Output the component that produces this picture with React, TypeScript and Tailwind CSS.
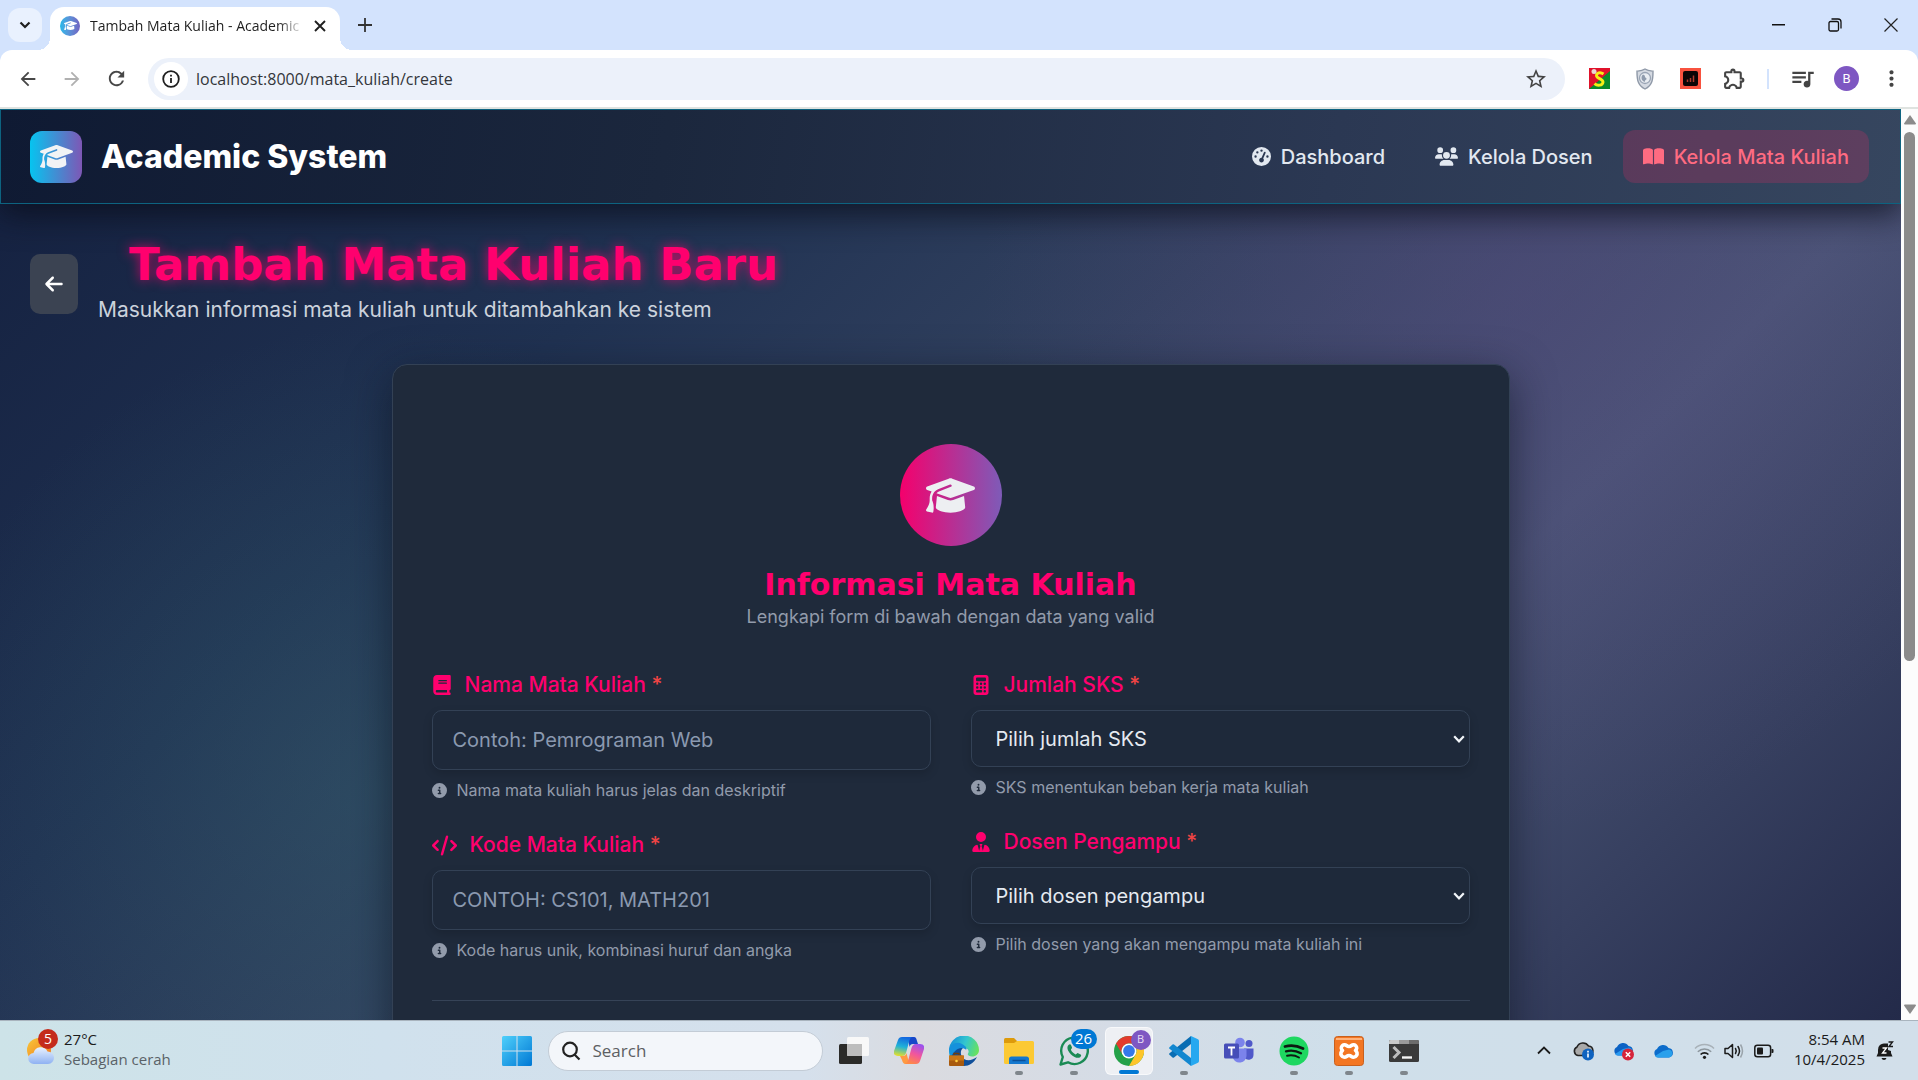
import type { ReactNode } from "react";
import {
  FaArrowLeft,
  FaBook,
  FaBookOpen,
  FaCalculator,
  FaCircleInfo,
  FaCode,
  FaGaugeHigh,
  FaGraduationCap,
  FaUserTie,
  FaUsers,
} from "react-icons/fa6";
import {
  MdArrowBack,
  MdArrowForward,
  MdMoreVert,
  MdOutlineExtension,
  MdQueueMusic,
  MdRefresh,
  MdStarBorder,
} from "react-icons/md";

function TabStrip() {
  return (
    <div className="flex h-[50px] shrink-0 items-end bg-[#d3e3fd] pl-2">
      <button
        aria-label="Search tabs"
        className="mb-2 flex h-[34px] w-[34px] items-center justify-center rounded-xl bg-[#e9f1fe]"
      >
        <svg width="12" height="8" viewBox="0 0 12 8" fill="none" stroke="#1f1f1f" strokeWidth="2.2">
          <path d="M1.5 1.5 6 6l4.5-4.5" />
        </svg>
      </button>
      <div className="-ml-1 flex h-[43px] items-end">
        <span className="h-3 w-3 bg-[radial-gradient(circle_at_0_0,transparent_12px,white_12px)]" />
        <div className="flex h-[43px] w-[290px] items-center rounded-t-[14px] bg-white pr-1 pb-1.5 pl-1.5">
          <span className="ml-1 flex h-5 w-5 shrink-0 items-center justify-center rounded-full bg-gradient-to-r from-[#1bb9ea] to-[#6f63c2] text-white">
            <FaGraduationCap size={13} />
          </span>
          <span className="ml-2.5 flex-1 overflow-hidden font-['Open_Sans','Noto_Sans',sans-serif] text-[14px] whitespace-nowrap text-[#1f1f1f] [mask-image:linear-gradient(to_right,black_88%,transparent)]">
            Tambah Mata Kuliah - Academic
          </span>
          <button aria-label="Close tab" className="flex h-5 w-8 items-center justify-center">
            <svg width="12" height="12" viewBox="0 0 12 12" stroke="#1f1f1f" strokeWidth="1.9">
              <path d="m1 1 10 10M11 1 1 11" />
            </svg>
          </button>
        </div>
        <span className="h-3 w-3 bg-[radial-gradient(circle_at_100%_0,transparent_12px,white_12px)]" />
      </div>
      <button aria-label="New tab" className="mb-4 ml-1 flex h-[18px] w-[18px] items-center justify-center">
        <svg width="14" height="14" viewBox="0 0 14 14" stroke="#333" strokeWidth="1.8">
          <path d="M7 0v14M0 7h14" />
        </svg>
      </button>
      <div className="ml-auto flex h-full items-center gap-10 pr-[18px] text-black">
        <button aria-label="Minimize" className="flex h-4 w-4 items-center">
          <svg width="14" height="2" viewBox="0 0 14 2" fill="#111"><path d="M0 0h13v1.5H0z" /></svg>
        </button>
        <button aria-label="Restore" className="flex h-4 w-4 items-center">
          <svg width="14" height="14" viewBox="0 0 14 14" fill="none" stroke="#111" strokeWidth="1.3">
            <rect x="1" y="3.5" width="9.5" height="9.5" rx="1.5" />
            <path d="M3.5 1H10a3 3 0 0 1 3 3v6.5" />
          </svg>
        </button>
        <button aria-label="Close" className="flex h-4 w-4 items-center">
          <svg width="14" height="14" viewBox="0 0 14 14" stroke="#222" strokeWidth="1.2">
            <path d="m.5.5 13 13M13.5.5l-13 13" />
          </svg>
        </button>
      </div>
    </div>
  );
}

function Toolbar() {
  return (
    <div className="flex h-[59px] shrink-0 items-center rounded-t-xl border-b-2 border-[#dfe3e0] bg-white pr-3.5 pl-4">
      <div className="flex items-center gap-5 pr-5 text-[#474747]">
        <button aria-label="Back" className="flex h-6 w-6 items-center justify-center"><MdArrowBack size={22} /></button>
        <button aria-label="Forward" className="flex h-6 w-6 items-center justify-center text-[#b0b0b0]"><MdArrowForward size={22} /></button>
        <button aria-label="Reload" className="flex h-6 w-6 items-center justify-center"><MdRefresh size={23} /></button>
      </div>
      <div className="flex h-[42px] flex-1 items-center rounded-full bg-[#ecf1fa] pr-[17px] pl-1.5">
        <button aria-label="Site information" className="flex h-[34px] w-[34px] items-center justify-center rounded-full bg-white">
          <svg width="18" height="18" viewBox="0 0 18 18" fill="none" stroke="#1f1f1f" strokeWidth="1.8">
            <circle cx="9" cy="9" r="7.8" />
            <path d="M9 8v5M9 4.8v1.8" />
          </svg>
        </button>
        <input
          aria-label="Address"
          className="ml-2 min-w-0 flex-1 bg-transparent font-['Open_Sans','Noto_Sans',sans-serif] text-[16px] text-[#33363b] outline-none"
          defaultValue="localhost:8000/mata_kuliah/create"
        />
        <button aria-label="Bookmark" className="text-[#444]"><MdStarBorder size={24} /></button>
      </div>
      <div className="ml-6 flex items-center gap-[25px]">
        <svg width="21" height="21" viewBox="0 0 21 21">
          <path fill="#e0122b" d="M0 0h21v21H0z" />
          <path fill="#0a8a2b" d="M21 3v18H0z" />
          <path d="M14.5 6C11 3.500 7.500 5 7.500 7.800s7 3 6.500 6.400-5.500 4-8.500 1.500" fill="none" stroke="#f7ef16" strokeWidth="2.900" />
          <circle cx="5" cy="3.500" r="2.500" fill="#e9d7d3" />
        </svg>
        <svg width="20" height="22" viewBox="0 0 20 22">
          <path d="M10 1c3 2 5.5 2 8 2.200 0 8-.5 14-8 17.800C2.500 17.200 2 11.200 2 3.200 4.500 3 7 3 10 1Z" fill="#d5dae2" stroke="#8f99a8" strokeWidth="1.4" />
          <circle cx="10" cy="10" r="5.5" fill="#e9edf2" stroke="#9aa5b5" strokeWidth="1.3" />
          <path d="M8 6.500c3 1 1 2 3 3.500s-2 2-1 4c-2-.5-3.500-2-3.500-4S7 7.500 8 6.500Z" fill="#8f9bad" />
        </svg>
        <svg width="21" height="21" viewBox="0 0 21 21">
          <path fill="#f8523f" d="M0 0h21v21H0z" />
          <rect x="3" y="3" width="15" height="15" rx="2" fill="#0b0506" />
          <path d="M7.500 14v-2.500M10.500 14v-4M13.500 14V7.500" stroke="#b03a2e" strokeWidth="1.5" />
        </svg>
        <button aria-label="Extensions" className="-ml-1 text-[#444]"><MdOutlineExtension size={25} /></button>
      </div>
      <div className="ml-5 h-5 w-0.5 bg-[#d3e3fd]" />
      <button aria-label="Media controls" className="ml-5 text-[#444]"><MdQueueMusic size={27} /></button>
      <button aria-label="Profile" className="ml-[18px] flex h-[25px] w-[25px] items-center justify-center rounded-full bg-[#7e57c2] font-[Roboto,sans-serif] text-[13px] text-white">
        B
      </button>
      <button aria-label="Menu" className="ml-5 text-[#444]"><MdMoreVert size={25} /></button>
    </div>
  );
}

function NavLink({ icon, active, children }: { icon: ReactNode; active?: boolean; children: string }) {
  return (
    <a
      href="#"
      className={
        active
          ? "flex h-[53px] items-center gap-2.5 rounded-xl bg-[#ff2a66]/20 px-5 text-[#ff6b81]"
          : "flex h-[53px] items-center gap-2.5 rounded-xl px-5 text-[#e2e8f0]"
      }
    >
      {icon}
      <span>{children}</span>
    </a>
  );
}

function Navbar() {
  return (
    <nav className="flex h-[95px] shrink-0 items-center border border-[#0d6380] bg-[linear-gradient(100deg,#0f1a33_0%,#1b273d_35%,#2b3853_70%,#36465f_100%)] pr-[31px] pl-[29px] shadow-[0_10px_32px_rgba(10,12,24,0.75)]">
      <span className="flex h-[52px] w-[52px] items-center justify-center rounded-xl bg-[linear-gradient(to_right,#06c4f0,#7e57b5)] text-[#f1f3f5]">
        <FaGraduationCap size={33} />
      </span>
      <span className="ml-[19px] font-[Inter,sans-serif] text-[32px] font-extrabold text-white">Academic System</span>
      <div className="ml-auto flex items-center gap-2.5 font-[Inter,sans-serif] text-[20px] font-medium">
        <NavLink icon={<FaGaugeHigh size={19} />}>Dashboard</NavLink>
        <NavLink icon={<FaUsers size={23} />}>Kelola Dosen</NavLink>
        <NavLink active icon={<FaBookOpen size={21} />}>Kelola Mata Kuliah</NavLink>
      </div>
    </nav>
  );
}

function Label({ id, icon, children }: { id: string; icon: ReactNode; children: string }) {
  return (
    <label htmlFor={id} className="flex h-[30px] items-center text-[21px] font-medium text-[#ff006e]">
      {icon}
      <span className="ml-[13px]">
        {children} <span className="text-[#ef4444]">*</span>
      </span>
    </label>
  );
}

function Hint({ children }: { children: string }) {
  return (
    <p className="mt-2.5 flex h-5 items-center gap-2.5 text-[16px] text-[#929bab]">
      <FaCircleInfo size={15} />
      {children}
    </p>
  );
}

type FieldProps = { id: string; icon: ReactNode; label: string; text: string; hint: string };

function TextField({ id, icon, label, text, hint }: FieldProps) {
  return (
    <div>
      <Label id={id} icon={icon}>{label}</Label>
      <input
        id={id}
        placeholder={text}
        className="mt-2.5 block h-[60px] w-full rounded-[10px] border border-[#334155] bg-[#1e293b]/80 px-5 text-[20px] text-[#e2e8f0] shadow-[0_4px_10px_rgba(0,0,0,0.15)] outline-none placeholder:text-[#8b99b0]"
      />
      <Hint>{hint}</Hint>
    </div>
  );
}

function SelectField({ id, icon, label, text, hint }: FieldProps) {
  return (
    <div>
      <Label id={id} icon={icon}>{label}</Label>
      <div className="relative mt-2.5">
        <select
          id={id}
          className="block h-[57px] w-full appearance-none rounded-[10px] border border-[#334155] bg-[#1e293b]/80 px-6 text-[20px] text-[#e5eaf1] shadow-[0_4px_10px_rgba(0,0,0,0.15)] outline-none"
        >
          <option>{text}</option>
        </select>
        <svg
          className="pointer-events-none absolute top-1/2 right-[5px] -translate-y-1/2"
          width="12" height="9" viewBox="0 0 12 9" fill="none" stroke="#f1f5f9" strokeWidth="2.2"
        >
          <path d="m1.2 1.800 4.800 5 4.800-5" />
        </svg>
      </div>
      <Hint>{hint}</Hint>
    </div>
  );
}

function CourseForm() {
  return (
    <form className="mx-auto w-full max-w-[1118px] rounded-[15px] border border-[#334155] bg-[#1f2a3b] px-[39px] pt-[79px] pb-40 shadow-[0_12px_44px_rgba(12,16,30,0.6)]">
      <div className="flex flex-col items-center">
        <span className="flex h-[102px] w-[102px] items-center justify-center rounded-full bg-[linear-gradient(to_right,#f5006c,#7e5bb8)] text-[#edeff2]">
          <FaGraduationCap size={49} />
        </span>
        <h2 className="mt-[21px] font-['DejaVu_Sans',sans-serif] text-[30px] leading-9 font-bold text-[#ff006e]">
          Informasi Mata Kuliah
        </h2>
        <p className="text-[18px] leading-7 text-[#929bab]">Lengkapi form di bawah dengan data yang valid</p>
      </div>
      <div className="mt-[39px] grid grid-cols-2 gap-10 border-b border-[#364357] pb-10">
        <div className="flex flex-col gap-[30px]">
          <TextField id="nama" icon={<FaBook size={20} />} label="Nama Mata Kuliah" text="Contoh: Pemrograman Web" hint="Nama mata kuliah harus jelas dan deskriptif" />
          <TextField id="kode" icon={<FaCode size={25} />} label="Kode Mata Kuliah" text="CONTOH: CS101, MATH201" hint="Kode harus unik, kombinasi huruf dan angka" />
        </div>
        <div className="flex flex-col gap-[30px]">
          <SelectField id="sks" icon={<FaCalculator size={20} />} label="Jumlah SKS" text="Pilih jumlah SKS" hint="SKS menentukan beban kerja mata kuliah" />
          <SelectField id="dosen" icon={<FaUserTie size={20} />} label="Dosen Pengampu" text="Pilih dosen pengampu" hint="Pilih dosen yang akan mengampu mata kuliah ini" />
        </div>
      </div>
    </form>
  );
}

function Page() {
  return (
    <div className="flex min-h-0 flex-1">
      <div className="min-h-0 min-w-0 flex-1 overflow-hidden bg-[radial-gradient(circle_at_20%_75%,rgba(52,100,112,0.4),transparent_28%),radial-gradient(circle_at_80%_20%,rgba(90,70,130,0.35),transparent_32%),linear-gradient(135deg,#14203f_0%,#203252_28%,#334260_48%,#4a5576_70%,#232a49_100%)]">
        <Navbar />
        <main className="font-[Inter,sans-serif]">
          <header className="flex items-start px-[30px] pt-[34px] pb-9">
            <a href="#" aria-label="Kembali" className="mt-4 flex h-[60px] w-12 items-center justify-center rounded-[10px] bg-[#3b4352] text-white">
              <FaArrowLeft size={20} />
            </a>
            <div className="ml-5">
              <h1 className="pl-[31px] font-['DejaVu_Sans',sans-serif] text-[45px] leading-[54px] font-bold text-[#ff006e] [text-shadow:0_0_12px_rgba(255,0,110,0.7)]">
                Tambah Mata Kuliah Baru
              </h1>
              <p className="text-[21px] leading-9 text-[#cbd2dc]">
                Masukkan informasi mata kuliah untuk ditambahkan ke sistem
              </p>
            </div>
          </header>
          <CourseForm />
        </main>
      </div>
      <div className="flex w-[17px] shrink-0 flex-col items-center bg-[#fcfcfc] py-1.5">
        <svg width="12" height="10" viewBox="0 0 12 10" fill="#8b8b8b"><path d="M6 0 12 8.500q0 1-1 1H1q-1 0-1-1Z" /></svg>
        <div className="mt-[7px] w-[11px] grow-[529] rounded-full bg-[#8b8b8b]" />
        <div className="grow-[343]" />
        <svg width="12" height="10" viewBox="0 0 12 10" fill="#8b8b8b"><path d="M6 10 0 1.500q0-1 1-1h10q1 0 1 1Z" /></svg>
      </div>
    </div>
  );
}

function TaskbarApp({ label, running, active, children }: { label: string; running?: boolean; active?: boolean; children: ReactNode }) {
  return (
    <button
      aria-label={label}
      className={
        active
          ? "relative flex h-12 w-12 items-center justify-center rounded-md border border-white/60 bg-[#eef0f4]"
          : "relative flex h-12 w-12 items-center justify-center"
      }
    >
      {children}
      {active && <span className="absolute bottom-0 h-1 w-5 rounded-full bg-[#0078d4]" />}
      {running && <span className="absolute bottom-0 h-1 w-2 rounded-full bg-[#7f868c]" />}
    </button>
  );
}

function WeatherWidget() {
  return (
    <div className="relative flex items-center pb-1">
      <svg width="30" height="40" viewBox="0 0 30 40">
        <defs>
          <linearGradient id="sun" x1="0" y1="0" x2="1" y2="1"><stop stopColor="#f7c83a" /><stop offset="1" stopColor="#f2711c" /></linearGradient>
          <linearGradient id="cloud" x1="0" y1="0" x2="0" y2="1"><stop stopColor="#e8f1ff" /><stop offset="1" stopColor="#8fb2f2" /></linearGradient>
        </defs>
        <circle cx="13" cy="21" r="12" fill="url(#sun)" />
        <path d="M8 35a5.500 5.500 0 0 1-.5-11 7.500 7.500 0 0 1 14-1.500A6.200 6.200 0 0 1 22 35Z" fill="url(#cloud)" />
      </svg>
      <span className="absolute top-0 left-3 flex h-5 w-5 items-center justify-center rounded-full bg-[#c42b1c] text-[14px] text-white">5</span>
      <div className="ml-2 text-[15px] leading-5">
        <div className="text-[#1b1b1b]">27°C</div>
        <div className="text-[#5a6268]">Sebagian cerah</div>
      </div>
    </div>
  );
}

function TaskbarApps() {
  return (
    <div className="flex items-center gap-[7px]">
      <TaskbarApp label="Start">
        <svg width="30" height="30" viewBox="0 0 30 30">
          <defs><linearGradient id="win" x1="0" y1="0" x2="1" y2="1"><stop stopColor="#4fd0fb" /><stop offset="1" stopColor="#0078d4" /></linearGradient></defs>
          <path fill="url(#win)" d="M1.500 0H14.500v14.500H0V1.500Q0 0 1.500 0ZM15.500 0h13Q30 0 30 1.500V14.500H15.500ZM0 15.500h14.500V30H1.500Q0 30 0 28.500ZM15.500 15.500H30v13q0 1.500-1.500 1.500h-13Z" />
        </svg>
      </TaskbarApp>
      <label className="flex h-10 w-[275px] items-center rounded-full border border-[#c3ccd6] bg-[#f3f6fa] pl-3">
        <svg width="20" height="20" viewBox="0 0 20 20" fill="none" stroke="#222" strokeWidth="2.2">
          <circle cx="9" cy="8.500" r="6.800" /><path d="m13.500 13.500 5 5" />
        </svg>
        <input aria-label="Search" placeholder="Search" className="ml-3 w-40 bg-transparent text-[17px] outline-none placeholder:text-[#5d5f63]" />
      </label>
      <TaskbarApp label="Task view">
        <svg width="30" height="30" viewBox="0 0 30 30">
          <rect x="0" y="8" width="23" height="20" rx="1.5" fill="#2b2b29" />
          <rect x="8" y="1" width="22" height="19" rx="1.5" fill="#f8f8f8" />
          <path d="M8 8h15v12H9.500Q8 20 8 18.500Z" fill="#bdbdbd" />
        </svg>
      </TaskbarApp>
      <TaskbarApp label="Copilot">
        <svg width="30" height="30" viewBox="0 0 30 30">
          <defs>
            <linearGradient id="cop1" x1="0.500" y1="0" x2="0.300" y2="1"><stop stopColor="#1368e0" /><stop offset=".5" stopColor="#20b2d8" /><stop offset="1" stopColor="#e3df2c" /></linearGradient>
            <linearGradient id="cop2" x1="0.700" y1="0" x2="0.300" y2="1"><stop stopColor="#9a52ee" /><stop offset=".5" stopColor="#f2569c" /><stop offset="1" stopColor="#ff8b45" /></linearGradient>
          </defs>
          <path d="M14 1h6c2 0 2.500 2 3 4l1 3h-5c-2 0-3 1-3.500 3Z" fill="#1747c9" />
          <path d="M8 1h10c-2 1-2.500 3-3 5l-3 11c-.6 2-2 3-4 3H4c-3 0-5-2-4-5L4 4c.6-2 2-3 4-3Z" fill="url(#cop1)" />
          <path d="M6 20h3c2 0 3-1 3.500-3l2 8c.5 2-1 3-2 3h-1c-2 0-3-2-3.500-4Z" fill="#ff9a42" />
          <path d="M22 28H11c2-1 3-3 3.500-5l3-11c.6-2 2-4 4-4H26c3 0 5 2 4 5l-4 12c-.6 2-2 3-4 3Z" fill="url(#cop2)" />
        </svg>
      </TaskbarApp>
      <TaskbarApp label="Edge">
        <svg width="30" height="30" viewBox="0 0 30 30">
          <defs>
            <linearGradient id="ed" x1="0" y1="0.300" x2="1" y2="0.600"><stop stopColor="#158fd8" /><stop offset=".5" stopColor="#33c6cf" /><stop offset="1" stopColor="#6be35a" /></linearGradient>
          </defs>
          <path d="M0 15a15 15 0 0 1 30-1c0 4-3 6.500-7 6.500-3 0-5-1.500-4-3 2-3-1-6-5-6C7 11.500 2 17 2 23c-1.300-2.500-2-5-2-8Z" fill="url(#ed)" />
          <path d="M2 23C1 14 9 9 14 12c-3 2-3 8 1 11 4 2.500 9 1 13-2-3 6-8 9-13 9C9 30 4 27 2 23Z" fill="#0f4f9a" />
          <path d="M0 14c1-6 8-9 13-6 6 3 5 7 3 5-6-3-11 2-14 8Z" fill="#1591dc" />
          <rect x="0" y="19.5" width="15" height="10.5" rx="1" fill="#a85a0e" />
          <path d="M0 19.500h15v5H0z" fill="#c97616" />
          <path d="M5 19v-1.500h5V19" fill="none" stroke="#6f3e0e" strokeWidth="1.3" />
          <circle cx="7.5" cy="25" r="1.3" fill="#ffcf3f" />
        </svg>
      </TaskbarApp>
      <TaskbarApp label="File Explorer" running>
        <svg width="30" height="30" viewBox="0 0 30 30">
          <path d="M0 3.500Q0 2 1.500 2H10l3 3v5H0Z" fill="#dd9a0b" />
          <path d="M0 7h10l3-2h15.500Q30 5 30 6.500v20q0 1.500-1.500 1.500h-27Q0 28 0 26.500Z" fill="#fcc933" />
          <path d="M5 28v-5q0-2.500 2.500-2.500h15Q25 20.500 25 23v5Z" fill="#1478cf" />
          <path d="M8.500 24.500h13" stroke="#0b4f97" strokeWidth="1.5" />
        </svg>
      </TaskbarApp>
      <TaskbarApp label="WhatsApp" running>
        <svg width="30" height="30" viewBox="0 0 30 30" fill="none" stroke="#1a8a54" strokeWidth="2.4">
          <path d="M1.500 28.500 3.800 21A13.300 13.300 0 1 1 9 26.300Z" strokeLinejoin="round" />
          <path d="M9.500 9c1-1 2-1 2.500 0l1 2.500c.3 1-1.500 1.800-1 2.600 1 2 2.500 3.400 4.600 4.300.8.300 1.500-1.700 2.500-1.200l2.500 1.300c1 .5.500 2-.5 2.700-1.300 1-3.500.8-5.500-.2-3-1.500-5-3.500-6.500-6.500-1-2-.9-4.300.4-5.500Z" fill="#1a8a54" stroke="none" />
        </svg>
        <span className="absolute top-[2px] left-[21px] flex h-5 w-[26px] items-center justify-center rounded-full bg-[#0078d4] text-[15px] text-white">26</span>
      </TaskbarApp>
      <TaskbarApp label="Chrome" active>
        <svg width="30" height="30" viewBox="0 0 30 30">
          <circle cx="15" cy="15" r="15" fill="#24a148" />
          <path d="M15 0a15 15 0 0 1 13 7.500H15A7.500 7.500 0 0 0 8.500 18.700L2 7.500A15 15 0 0 1 15 0Z" fill="#e33b2e" />
          <path d="M28 7.500A15 15 0 0 1 15 30l6.500-11.200A7.500 7.500 0 0 0 15 7.500Z" fill="#fdc52a" />
          <circle cx="15" cy="15" r="7.5" fill="#fff" /><circle cx="15" cy="15" r="5.9" fill="#3479ea" />
        </svg>
        <span className="absolute top-[2px] left-[25px] flex h-5 w-5 items-center justify-center rounded-full bg-[#7e57c2] text-[11px] text-[#e6dcf5]">B</span>
      </TaskbarApp>
      <TaskbarApp label="Visual Studio Code" running>
        <svg width="30" height="30" viewBox="0 0 30 30">
          <path d="M22 0v8L5 21.500q-.8.600-1.500 0l-3-2.700q-.8-.8 0-1.600Z" fill="#0a6db3" />
          <path d="M22 30v-8L5 8.500q-.8-.6-1.500 0l-3 2.700q-.8.800 0 1.600Z" fill="#1287d0" />
          <path d="m22 0 7 3.200q1 .5 1 1.800v20q0 1.300-1 1.800L22 30Z" fill="#26a8f0" />
        </svg>
      </TaskbarApp>
      <TaskbarApp label="Teams">
        <svg width="30" height="30" viewBox="0 0 30 30">
          <circle cx="25" cy="7.5" r="3.5" fill="#5059c9" /><path d="M20 12.500h9.500V19a5 5 0 0 1-9.500 2Z" fill="#5059c9" />
          <circle cx="16" cy="6.5" r="4.8" fill="#7b83eb" /><path d="M9 12.500h13.500V20a7 7 0 0 1-13.500 2Z" fill="#7b83eb" />
          <rect x="0" y="7.5" width="15" height="15" rx="1.5" fill="#464eb8" />
          <path d="M4 11.500h7M7.500 11.500v8" stroke="#fff" strokeWidth="1.8" />
        </svg>
      </TaskbarApp>
      <TaskbarApp label="Spotify" running>
        <svg width="30" height="30" viewBox="0 0 30 30">
          <circle cx="15" cy="15" r="14.5" fill="#1ed760" />
          <g fill="none" stroke="#0d1a12" strokeLinecap="round"><path d="M6 10.500q9-2.500 18 2" strokeWidth="2.8" /><path d="M7 15.300q8-2 15 2" strokeWidth="2.3" /><path d="M8 19.700q6.500-1.500 12 1.800" strokeWidth="1.9" /></g>
        </svg>
      </TaskbarApp>
      <TaskbarApp label="XAMPP" running>
        <svg width="30" height="30" viewBox="0 0 30 30">
          <rect x=".5" y=".5" width="29" height="29" rx="3" fill="#f37623" stroke="#c8601e" />
          <path d="M2 2h26v2H2z" fill="#ffb27a" />
          <path d="M12.500 9.500a3.200 3.200 0 1 0-4 5 3.500 3.500 0 1 0 4 6q2.500-2 5 0a3.500 3.500 0 1 0 4-6 3.200 3.200 0 1 0-4-5q-2.500 2-5 0Z" fill="none" stroke="#fff" strokeWidth="3.6" strokeLinejoin="round" />
        </svg>
      </TaskbarApp>
      <TaskbarApp label="Terminal" running>
        <svg width="30" height="30" viewBox="0 0 30 30">
          <rect x="0" y="4" width="30" height="22" rx="1.5" fill="#3a3a3a" />
          <path d="M1.500 4H10v4H0V5.500Q0 4 1.500 4Z" fill="#c9c9c9" /><path d="M10 4h10v4H10z" fill="#9a9a9a" /><path d="M20 4h8.500Q30 4 30 5.500V8H20z" fill="#6c6c6c" />
          <path d="m4.500 11 5.500 5.500-5.500 5.500" fill="none" stroke="#bcbcbc" strokeWidth="3" /><path d="M13 21.500h10" stroke="#f5f5f5" strokeWidth="2.4" />
        </svg>
      </TaskbarApp>
    </div>
  );
}

function Cloud({ top, bottom, outline }: { top: string; bottom: string; outline?: string }) {
  return (
    <g stroke={outline} strokeWidth={outline ? 1.6 : 0}>
      <path d="M5 14.500A4.500 4.500 0 0 1 4 6 6.500 6.500 0 0 1 15.500 5 4.800 4.800 0 0 1 16 14.500Z" fill={top} />
      {!outline && <path d="M2 13 10 8l6-1.500a4.100 4.100 0 0 1 0 8H5q-2 0-3-1.500Z" fill={bottom} />}
    </g>
  );
}

function Tray() {
  return (
    <div className="flex items-center text-[#1b1b1b]">
      <button aria-label="Show hidden icons" className="mr-[22px]">
        <svg width="14" height="9" viewBox="0 0 14 9" fill="none" stroke="#1b1b1b" strokeWidth="1.8"><path d="m1 7.500 6-6 6 6" /></svg>
      </button>
      <svg className="mr-[19px]" width="21" height="20" viewBox="0 0 21 20">
        <Cloud top="#a9a9a9" bottom="#a9a9a9" outline="#222" />
        <circle cx="15" cy="13.5" r="6" fill="#0f63c0" /><path d="M15 12.500v4M15 9.800v1.600" stroke="#fff" strokeWidth="1.6" />
      </svg>
      <svg className="mr-[18px]" width="22" height="20" viewBox="0 0 22 20">
        <Cloud top="#0c62c4" bottom="#2a9af0" />
        <circle cx="15" cy="13.5" r="6" fill="#d6243a" /><path d="m12.800 11.300 4.400 4.400m0-4.400-4.400 4.400" stroke="#fff" strokeWidth="1.5" />
      </svg>
      <svg className="mr-[20px]" width="21" height="16" viewBox="0 0 21 16"><Cloud top="#0c6ccb" bottom="#29a0ec" /></svg>
      <svg className="mr-[9px]" width="21" height="18" viewBox="0 0 21 18" fill="none" strokeWidth="1.5">
        <path d="M1 6.500a13.500 13.500 0 0 1 19 0" stroke="#a8b1b8" /><path d="M3.800 9.700a9.500 9.500 0 0 1 13.400 0" stroke="#8d979e" /><path d="M6.600 12.500a5.500 5.500 0 0 1 7.800 0" stroke="#1b1b1b" strokeWidth="1.7" />
        <circle cx="10.5" cy="15.3" r="1.6" fill="#1b1b1b" />
      </svg>
      <svg className="mr-[10px]" width="20" height="18" viewBox="0 0 20 18" fill="none" stroke="#1b1b1b" strokeWidth="1.5" strokeLinejoin="round">
        <path d="M1 6.500v5h3l4.500 4V2.500L4 6.500Z" /><path d="M11.500 6.500q1.500 2.500 0 5M14 4.500q3 4.500 0 9" strokeLinecap="round" /><path d="M16.500 2.500q4 6.500 0 13" stroke="#9aa3aa" />
      </svg>
      <svg className="mr-5" width="20" height="14" viewBox="0 0 20 14">
        <rect x=".8" y="1.3" width="15.8" height="11.4" rx="2.5" fill="none" stroke="#1b1b1b" strokeWidth="1.5" />
        <rect x="3" y="3.5" width="6" height="7" rx="1" fill="#1b1b1b" /><path d="M17.500 5h1q1 0 1 1v2q0 1-1 1h-1Z" fill="#1b1b1b" />
      </svg>
      <div className="pb-1 text-right text-[15px] leading-5">
        <div>8:54 AM</div>
        <div>10/4/2025</div>
      </div>
      <svg className="ml-[11px]" width="18" height="20" viewBox="0 0 18 20">
        <path d="M2 9a6 6 0 0 1 7-6.500h3V9l3 1v2l1.500 3.500H.5L2 12Z" fill="#1b1b1b" /><path d="M5.500 17h5q-.5 2-2.500 2t-2.500-2Z" fill="#1b1b1b" />
        <path d="M6.500 7h4l-4 5h4" fill="none" stroke="#fff" strokeWidth="1.3" /><path d="M12.500 1h4L13 5.500h4" fill="none" stroke="#1b1b1b" strokeWidth="1.4" />
      </svg>
    </div>
  );
}

function Taskbar() {
  return (
    <footer className="grid h-[60px] shrink-0 grid-cols-[1fr_auto_1fr] items-center border-t border-[#a9b4be] bg-[linear-gradient(to_right,#cde3e8_0%,#d0e1ed_20%,#d5e0ec_42%,#dadbe0_48%,#d5dce6_58%,#cfdfea_70%,#d2dfea_100%)] pr-6 pl-[26px] font-['Open_Sans','Noto_Sans',sans-serif]">
      <WeatherWidget />
      <TaskbarApps />
      <div className="justify-self-end"><Tray /></div>
    </footer>
  );
}

export default function App() {
  return (
    <div className="flex h-screen flex-col overflow-hidden bg-[#d3e3fd]">
      <TabStrip />
      <Toolbar />
      <Page />
      <Taskbar />
    </div>
  );
}
